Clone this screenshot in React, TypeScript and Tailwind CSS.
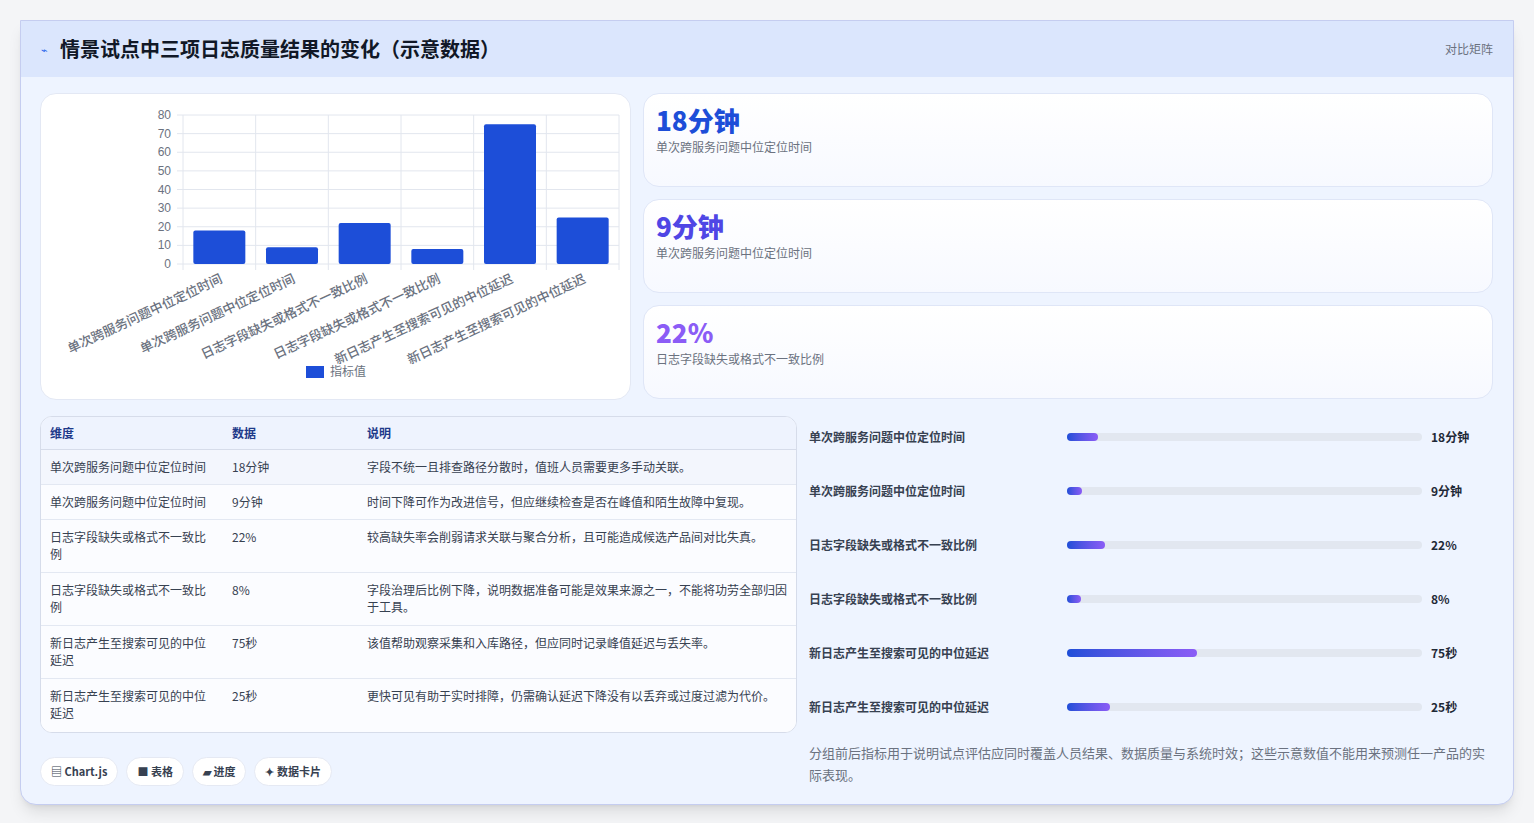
const font = { fontFamily: '"Noto Sans CJK SC", "Noto Sans", sans-serif' };

const bars = [
  { label: "单次跨服务问题中位定位时间", v: 18 },
  { label: "单次跨服务问题中位定位时间", v: 9 },
  { label: "日志字段缺失或格式不一致比例", v: 22 },
  { label: "日志字段缺失或格式不一致比例", v: 8 },
  { label: "新日志产生至搜索可见的中位延迟", v: 75 },
  { label: "新日志产生至搜索可见的中位延迟", v: 25 },
];

const stats = [
  { value: "18分钟", label: "单次跨服务问题中位定位时间", color: "text-[#1d4ed8]" },
  { value: "9分钟", label: "单次跨服务问题中位定位时间", color: "text-[#4f46e5]" },
  { value: "22%", label: "日志字段缺失或格式不一致比例", color: "text-[#8b5cf6]" },
];

const rows = [
  { dim: "单次跨服务问题中位定位时间", data: "18分钟", note: "字段不统一且排查路径分散时，值班人员需要更多手动关联。", pct: 8.7 },
  { dim: "单次跨服务问题中位定位时间", data: "9分钟", note: "时间下降可作为改进信号，但应继续检查是否在峰值和陌生故障中复现。", pct: 4.2 },
  { dim: "日志字段缺失或格式不一致比例", data: "22%", note: "较高缺失率会削弱请求关联与聚合分析，且可能造成候选产品间对比失真。", pct: 10.7 },
  { dim: "日志字段缺失或格式不一致比例", data: "8%", note: "字段治理后比例下降，说明数据准备可能是效果来源之一，不能将功劳全部归因于工具。", pct: 3.9 },
  { dim: "新日志产生至搜索可见的中位延迟", data: "75秒", note: "该值帮助观察采集和入库路径，但应同时记录峰值延迟与丢失率。", pct: 36.6 },
  { dim: "新日志产生至搜索可见的中位延迟", data: "25秒", note: "更快可见有助于实时排障，仍需确认延迟下降没有以丢弃或过度过滤为代价。", pct: 12.1 },
];

function Chart() {
  const x0 = 142, x1 = 578, y0 = 21, y1 = 170;
  const step = (x1 - x0) / 6;
  const sy = (y1 - y0) / 80;
  return (
    <svg width="590" height="307" className="block">
      {[0, 10, 20, 30, 40, 50, 60, 70, 80].map((t) => {
        const y = y1 - t * sy;
        return (
          <g key={t}>
            <line x1={x0 - 6} x2={x1} y1={y} y2={y} stroke="#e2e6ee" />
            <text x={x0 - 12} y={y + 4} textAnchor="end" fontSize="12" fill="#6b7280" fontFamily="Liberation Sans, sans-serif">{t}</text>
          </g>
        );
      })}
      {[0, 1, 2, 3, 4, 5, 6].map((i) => (
        <line key={i} x1={x0 + i * step} x2={x0 + i * step} y1={y0} y2={y1 + 6} stroke="#e2e6ee" />
      ))}
      {bars.map((b, i) => {
        const cx = x0 + step * (i + 0.5);
        const h = b.v * sy;
        return (
          <g key={i}>
            <rect x={cx - 26} y={y1 - h} width="52" height={h} rx="2" fill="#1d4ed8" />
            <text
              x={cx + 4}
              y={y1 + 18}
              textAnchor="end"
              fontSize="13"
              fontWeight="500"
              fill="#6b7280"
              fontFamily='"Noto Sans CJK SC", sans-serif'
              transform={`rotate(-25 ${cx + 4} ${y1 + 18})`}
            >
              {b.label}
            </text>
          </g>
        );
      })}
      <rect x="265" y="272" width="18" height="12" fill="#1d4ed8" />
      <text x="289" y="282" fontSize="12" fill="#6b7280" fontFamily='"Noto Sans CJK SC", sans-serif'>指标值</text>
    </svg>
  );
}

export default function App() {
  return (
    <div className="min-h-screen bg-[#f4f5f7] px-5 pt-5" style={font}>
      <div className="w-[1494px] overflow-hidden rounded-b-2xl border border-[#c5cdf0] bg-[#eef4ff] shadow-lg">
        <div className="flex h-[56px] items-center justify-between bg-[#dbe6fd] px-5">
          <div className="flex items-center gap-3">
            <span className="text-[11px] text-[#2563eb]">⌁</span>
            <h1 className="text-[20px] font-bold text-[#111827]">情景试点中三项日志质量结果的变化（示意数据）</h1>
          </div>
          <span className="text-[12px] text-[#6b7280]">对比矩阵</span>
        </div>

        <div className="flex flex-col gap-4 pl-[19px] pr-5 pt-4">
          <div className="flex gap-3">
            <div className="h-[307px] w-[591px] shrink-0 rounded-2xl border border-[#e3e8f4] bg-white">
              <Chart />
            </div>
            <div className="flex flex-1 flex-col gap-3">
              {stats.map((s, i) => (
                <div key={i} className="h-[94px] rounded-2xl border border-[#dfe6f7] bg-gradient-to-b from-white to-[#f7f9ff] px-3 pt-2">
                  <div className={`text-[26px] font-black leading-[36px] ${s.color}`}>{s.value}</div>
                  <div className="text-[12px] text-[#6b7280]">{s.label}</div>
                </div>
              ))}
            </div>
          </div>

          <div className="flex gap-3">
            <div className="flex w-[757px] shrink-0 flex-col gap-6">
              <div className="overflow-hidden rounded-xl border border-[#d6dcea] bg-white text-[12px]">
                <div className="flex h-[33px] items-center border-b border-[#d6dcea] bg-[#eef3fe] font-semibold text-[#1e3a8a]">
                  <div className="w-[182px] pl-[9px]">维度</div>
                  <div className="w-[135px] pl-[9px]">数据</div>
                  <div className="flex-1 pl-[9px]">说明</div>
                </div>
                {rows.map((r, i) => (
                  <div key={i} className={`flex border-b border-[#e3e8f2] pt-[8px] leading-[17px] text-[#374151] last:border-b-0 ${i < 2 ? "h-[35px]" : "h-[53px]"} ${i === 0 ? "bg-[#f3f6fd]" : "bg-[#fbfcff]"}`}>
                    <div className="w-[182px] px-[9px]">{r.dim}</div>
                    <div className="w-[135px] px-[9px]">{r.data}</div>
                    <div className="flex-1 px-[9px]">{r.note}</div>
                  </div>
                ))}
              </div>
              <div className="flex gap-2 text-[11px] font-semibold text-[#374151]">
                <span className="rounded-full border border-[#e5e9f3] bg-white px-[10px] py-[5px]">▤ Chart.js</span>
                <span className="rounded-full border border-[#e5e9f3] bg-white px-[10px] py-[5px]">■ 表格</span>
                <span className="rounded-full border border-[#e5e9f3] bg-white px-[10px] py-[5px]">▰ 进度</span>
                <span className="rounded-full border border-[#e5e9f3] bg-white px-[10px] py-[5px]">✦ 数据卡片</span>
              </div>
            </div>

            <div className="-mt-[6px] flex flex-1 flex-col">
              {rows.map((r, i) => (
                <div key={i} className="flex h-[54px] items-center text-[12px] font-semibold text-[#374151]">
                  <div className="w-[258px]">{r.dim}</div>
                  <div className="h-2 w-[355px] rounded-full bg-[#e2e7f0]">
                    <div className="h-2 min-w-[14px] rounded-full bg-gradient-to-r from-[#1d4ed8] to-[#8b5cf6]" style={{ width: `${r.pct}%` }} />
                  </div>
                  <div className="pl-[9px] text-[#1f2937]">{r.data}</div>
                </div>
              ))}
              <p className="mt-[8px] pr-2 text-[13px] leading-[22px] text-[#6b7280]">
                分组前后指标用于说明试点评估应同时覆盖人员结果、数据质量与系统时效；这些示意数值不能用来预测任一产品的实际表现。
              </p>
            </div>
          </div>
        </div>
        <div className="h-[18px]" />
      </div>
    </div>
  );
}
